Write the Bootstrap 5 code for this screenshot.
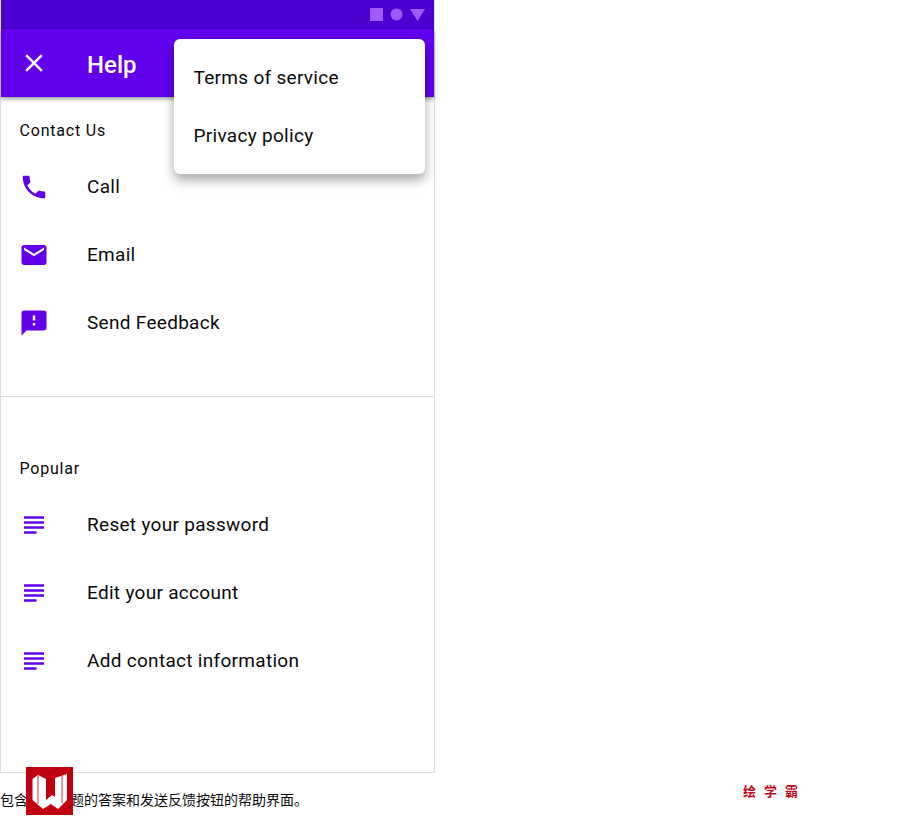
<!DOCTYPE html>
<html lang="zh">
<head>
    <meta charset="UTF-8">
    <meta name="viewport" content="width=device-width, initial-scale=1.0">
    <title>Help</title>
    <link href="https://cdn.jsdelivr.net/npm/bootstrap@5.3.0/dist/css/bootstrap.min.css" rel="stylesheet">
    <style>
        body { font-family: Roboto, "Noto Sans CJK SC", sans-serif; color: #0a0a0a; background: #fff; }
        .phone { width: 435px; height: 773px; border: 1px solid #ddd; border-top: 0; }
        .status-bar { height: 29px; background: #4b00d1; padding-right: 9px; gap: 7px; }
        .app-bar { height: 68px; background: #6200ee; color: #fff; box-shadow: 0 2px 4px rgba(0,0,0,.4); padding-left: 18px; }
        .app-title { font-size: 24px; font-weight: 500; margin-left: 38px; margin-top: 3px; margin-bottom: 0; }
        .help-section { padding-top: 22px; padding-bottom: 39px; }
        .section-title { font-size: 16px; letter-spacing: .8px; line-height: 24px; padding-left: 18.5px; margin: 0; }
        .help-row { height: 68px; padding-left: 18px; font-size: 19px; letter-spacing: .3px; }
        .help-row svg { width: 30px; height: 30px; margin-right: 38px; flex: none; }
        .help-rows-contact { margin-top: 10px; }
        .help-rows-popular { margin-top: 10px; }
        .help-divider { height: 1px; background: #ddd; }
        .popular-section { padding-top: 60px; }
        .over-menu { position: absolute; left: 174px; top: 39px; width: 251px; height: 135px; background: #fff; border-radius: 6px; box-shadow: 0 6px 12px rgba(0,0,0,.35); padding: 10px 0; font-size: 19px; letter-spacing: .3px; }
        .over-menu div { height: 58px; padding-left: 19.5px; padding-top: 1px; }
        .caption-row { height: 60px; padding-right: 93px; font-size: 14px; font-family: "Noto Sans CJK SC", sans-serif; }
        .caption-text { margin-top: 16px; line-height: 20px; }
        .brand-text { color: #bc0c1c; font-weight: 700; font-size: 13px; letter-spacing: 8px; margin-top: 9px; line-height: 18px; }
        .red-logo { position: absolute; left: 26px; top: 767px; width: 47px; height: 48px; }
    </style>
</head>
<body class="position-relative">
    <div class="phone">
        <div class="status-bar d-flex align-items-center justify-content-end">
            <svg width="13" height="13" viewBox="0 0 13 13"><rect width="13" height="13" fill="#a259ff"/></svg>
            <svg width="13" height="13" viewBox="0 0 13 13"><circle cx="6.5" cy="6.5" r="6" fill="#a259ff"/></svg>
            <svg width="15" height="13" viewBox="0 0 15 13"><path d="M0 1h15L7.5 13z" fill="#a259ff"/></svg>
        </div>
        <div class="app-bar d-flex align-items-center">
            <svg width="30" height="30" viewBox="0 0 24 24" fill="#fff"><path d="M19 6.41 17.59 5 12 10.59 6.41 5 5 6.41 10.59 12 5 17.59 6.41 19 12 13.41 17.59 19 19 17.59 13.41 12z"/></svg>
            <p class="app-title">Help</p>
        </div>
        <div class="help-section">
            <p class="section-title">Contact Us</p>
            <div class="help-rows-contact">
                <div class="help-row d-flex align-items-center">
                    <svg viewBox="0 0 24 24" fill="#6200ee"><path d="M6.62 10.79c1.44 2.83 3.76 5.14 6.59 6.59l2.2-2.2c.27-.27.67-.36 1.02-.24 1.12.37 2.33.57 3.57.57.55 0 1 .45 1 1V20c0 .55-.45 1-1 1-9.39 0-17-7.61-17-17 0-.55.45-1 1-1h3.5c.55 0 1 .45 1 1 0 1.25.2 2.45.57 3.57.11.35.03.74-.25 1.02l-2.2 2.2z"/></svg>
                    <span>Call</span>
                </div>
                <div class="help-row d-flex align-items-center">
                    <svg viewBox="0 0 24 24" fill="#6200ee"><path d="M20 4H4c-1.1 0-1.99.9-1.99 2L2 18c0 1.1.9 2 2 2h16c1.1 0 2-.9 2-2V6c0-1.1-.9-2-2-2zm0 4-8 5-8-5V6l8 5 8-5v2z"/></svg>
                    <span>Email</span>
                </div>
                <div class="help-row d-flex align-items-center">
                    <svg viewBox="0 0 24 24" fill="#6200ee"><path d="M20 2H4c-1.1 0-1.99.9-1.99 2L2 22l4-4h14c1.1 0 2-.9 2-2V4c0-1.1-.9-2-2-2zm-7 12h-2v-2h2v2zm0-4h-2V6h2v4z"/></svg>
                    <span>Send Feedback</span>
                </div>
            </div>
        </div>
        <div class="help-divider"></div>
        <div class="popular-section">
            <p class="section-title">Popular</p>
            <div class="help-rows-popular">
                <div class="help-row d-flex align-items-center">
                    <svg viewBox="0 0 24 24" fill="#6200ee"><path d="M14 17H4v2h10v-2zm6-8H4v2h16V9zM4 15h16v-2H4v2zM4 5v2h16V5H4z"/></svg>
                    <span>Reset your password</span>
                </div>
                <div class="help-row d-flex align-items-center">
                    <svg viewBox="0 0 24 24" fill="#6200ee"><path d="M14 17H4v2h10v-2zm6-8H4v2h16V9zM4 15h16v-2H4v2zM4 5v2h16V5H4z"/></svg>
                    <span>Edit your account</span>
                </div>
                <div class="help-row d-flex align-items-center">
                    <svg viewBox="0 0 24 24" fill="#6200ee"><path d="M14 17H4v2h10v-2zm6-8H4v2h16V9zM4 15h16v-2H4v2zM4 5v2h16V5H4z"/></svg>
                    <span>Add contact information</span>
                </div>
            </div>
        </div>
    </div>

    <div class="over-menu">
        <div class="d-flex align-items-center">Terms of service</div>
        <div class="d-flex align-items-center">Privacy policy</div>
    </div>

    <div class="caption-row d-flex justify-content-between">
        <div class="caption-text">包含热门问题的答案和发送反馈按钮的帮助界面。</div>
        <div class="brand-text">绘学霸</div>
    </div>

    <svg class="red-logo" viewBox="0 0 47 48">
        <rect width="47" height="48" fill="#c00010"/>
        <path d="M6.5 12 12 8 20 12V33L26 28 29 30V11L41 7V33L32 42 25 37 17 42 6.5 33z" fill="#fff"/>
        <path d="M12 9V37M36 9V36" stroke="#c00010" stroke-width=".8" fill="none"/>
    </svg>

    <script src="https://cdn.jsdelivr.net/npm/bootstrap@5.3.0/dist/js/bootstrap.bundle.min.js"></script>
</body>
</html>
